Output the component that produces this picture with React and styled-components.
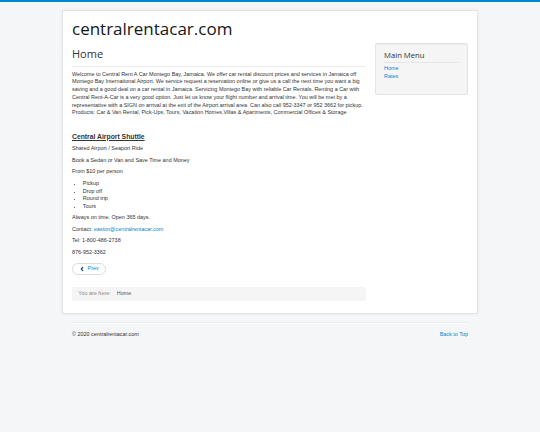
import React from 'react';
import styled, { createGlobalStyle } from 'styled-components';
import { ChevronLeft } from 'lucide-react';

const GlobalStyle = createGlobalStyle`
  html {
    background: #f4f6f7;
  }
  body {
    margin: 0;
    padding: 8px 0 0;
    border-top: 2px solid #0088cc;
    background: #f4f6f7;
    font-family: "Liberation Sans", Arial, sans-serif;
    font-size: 5.45px;
    line-height: 7.7px;
    color: #333;
  }
  a {
    color: #0088cc;
    text-decoration: none;
  }
`;

const Card = styled.div`
  width: 396px;
  margin: 0 auto;
  padding: 8px 9px 9px;
  background: #fff;
  border: 1px solid #e1e3e5;
  border-radius: 2px;
  box-shadow: 0 0 3px rgba(0, 0, 0, 0.08);
`;

const SiteTitle = styled.h1`
  margin: 0;
  font-family: "Open Sans", sans-serif;
  font-size: 17px;
  line-height: 20px;
  font-weight: 400;
  color: #16161a;
`;

const Row = styled.div`
  display: grid;
  grid-template-columns: 294px 1fr;
  column-gap: 9px;
  align-items: start;
  margin-top: 4px;
`;

const Main = styled.main`
  min-width: 0;
`;

const PageHeader = styled.div`
  padding: 4px 0 6px;
  border-bottom: 1px solid #eee;
  margin-bottom: 3.7px;
`;

const PageTitle = styled.h2`
  margin: 0;
  font-family: "Open Sans", sans-serif;
  font-size: 11px;
  line-height: 13px;
  font-weight: 400;
  color: #333;
`;

const Para = styled.p`
  margin: 0 0 3.9px;
`;

const ShuttleTitle = styled.p`
  margin: 16px 0 4.3px;
  font-size: 6.8px;
  line-height: 8px;
  font-weight: 700;
  text-decoration: underline;
  color: #333;
`;

const List = styled.ul`
  margin: 0 0 3.9px;
  padding-left: 10.8px;
  li {
    line-height: 7.6px;
  }
  li::marker {
    font-size: 4.5px;
  }
`;

const Pager = styled.div`
  margin: 6px 0 12.4px;
`;

const PagerButton = styled.a`
  display: inline-flex;
  align-items: center;
  gap: 3px;
  height: 10px;
  padding: 0 6px 0 5.5px;
  border: 1px solid #ddd;
  border-radius: 6px;
  background: #fff;
  color: #0088cc;
  svg {
    color: #1b4f8a;
  }
`;

const Breadcrumb = styled.div`
  display: flex;
  gap: 6px;
  height: 14.3px;
  align-items: center;
  padding: 0 6.3px;
  margin-bottom: 3px;
  background: #f5f5f5;
  border-radius: 2px;
  color: #555;
`;

const Muted = styled.span`
  color: #888;
`;

const Well = styled.aside`
  padding: 8px;
  background: #f5f5f5;
  border: 1px solid #e3e3e3;
  border-radius: 2px;
  box-shadow: inset 0 1px 1px rgba(0, 0, 0, 0.04);
`;

const WellHeader = styled.div`
  padding-bottom: 1.5px;
  border-bottom: 1px solid #e6e6e6;
  margin-top: -0.8px;
`;

const WellTitle = styled.h3`
  margin: 0;
  font-family: "Open Sans", sans-serif;
  font-size: 7.7px;
  line-height: 9px;
  font-weight: 400;
  color: #333;
`;

const Menu = styled.ul`
  list-style: none;
  margin: 2.6px 0 6px;
  padding: 0;
  li {
    line-height: 7.6px;
  }
`;

const Footer = styled.footer`
  width: 396px;
  margin: 8px auto 0;
`;

const FooterRule = styled.hr`
  margin: 0 0 6.3px;
  border: 0;
  border-top: 1px solid #e8eaec;
  border-bottom: 1px solid #fff;
`;

const FooterRow = styled.div`
  display: flex;
  justify-content: space-between;
`;

export default function App() {
  return (
    <>
      <GlobalStyle />
      <Card>
        <SiteTitle>centralrentacar.com</SiteTitle>
        <Row>
          <Main>
            <PageHeader>
              <PageTitle>Home</PageTitle>
            </PageHeader>
            <Para>
              Welcome to Central Rent A Car Montego Bay, Jamaica. We offer car rental discount prices and services in Jamaica off Montego Bay International Airport. We service request a reservation online or give us a call the next time you want a big saving and a good deal on a car rental in Jamaica. Servicing Montego Bay with reliable Car Rentals. Renting a Car with Central Rent-A-Car is a very good option. Just let us know your flight number and arrival time. You will be met by a representative with a SIGN on arrival at the exit of the Airport arrival area. Can also call 952-3347 or 952 3662 for pickup. Products: Car &amp; Van Rental, Pick-Ups, Tours, Vacation Homes,Villas &amp; Apartments, Commercial Offices &amp; Storage
            </Para>
            <ShuttleTitle>Central Airport Shuttle</ShuttleTitle>
            <Para>Shared Airport / Seaport Ride</Para>
            <Para>Book a Sedan or Van and Save Time and Money</Para>
            <Para>From $10 per person</Para>
            <List>
              <li>Pickup</li>
              <li>Drop off</li>
              <li>Round trip</li>
              <li>Tours</li>
            </List>
            <Para>Always on time. Open 365 days.</Para>
            <Para>
              Contact: <a href="#">easton@centralrentacar.com</a>
            </Para>
            <Para>Tel: 1-800-486-2738</Para>
            <Para>876-952-3362</Para>
            <Pager>
              <PagerButton href="#">
                <ChevronLeft size={6} strokeWidth={5} />
                Prev
              </PagerButton>
            </Pager>
            <Breadcrumb>
              <Muted>You are here:</Muted>
              <span>Home</span>
            </Breadcrumb>
          </Main>
          <Well>
            <WellHeader>
              <WellTitle>Main Menu</WellTitle>
            </WellHeader>
            <Menu>
              <li><a href="#">Home</a></li>
              <li><a href="#">Rates</a></li>
            </Menu>
          </Well>
        </Row>
      </Card>
      <Footer>
        <FooterRule />
        <FooterRow>
          <span>© 2020 centralrentacar.com</span>
          <a href="#">Back to Top</a>
        </FooterRow>
      </Footer>
    </>
  );
}
